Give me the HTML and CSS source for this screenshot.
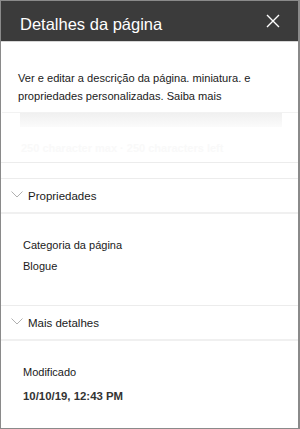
FILE: index.html
```html
<!DOCTYPE html>
<html lang="pt">
<head>
<meta charset="utf-8">
<link rel="stylesheet" href="styles.css">
</head>
<body>
<div class="panel">
  <header class="head">
    <h1 class="title">Detalhes da página</h1>
    <svg class="close" width="14" height="14" viewBox="0 0 14 14"><path d="M1 1L13 13M13 1L1 13" stroke="#fff" stroke-width="1.4" fill="none"/></svg>
  </header>
  <p class="desc">Ver e editar a descrição da página. miniatura. e propriedades personalizadas. Saiba mais</p>
  <div class="faded">
    <div class="thumb"><div class="thumb-a"></div><div class="thumb-b"></div></div>
    <div class="faded-text">250 character max · 250 characters left</div>
  </div>
  <section class="sec">
    <div class="sec-head">
      <svg class="chev" width="12" height="7" viewBox="0 0 12 7"><path d="M0.5 0.5L6 6L11.5 0.5" stroke="#b0b0b0" stroke-width="1" fill="none"/></svg>
      <span>Propriedades</span>
    </div>
    <div class="sec-body">
      <div class="label">Categoria da página</div>
      <div class="value">Blogue</div>
    </div>
  </section>
  <section class="sec last">
    <div class="sec-head">
      <svg class="chev" width="12" height="7" viewBox="0 0 12 7"><path d="M0.5 0.5L6 6L11.5 0.5" stroke="#b0b0b0" stroke-width="1" fill="none"/></svg>
      <span>Mais detalhes</span>
    </div>
    <div class="sec-body">
      <div class="label">Modificado</div>
      <div class="value bold">10/10/19, 12:43 PM</div>
    </div>
  </section>
</div>
</body>
</html>
```

FILE: styles.css
```css
html, body { margin: 0; padding: 0; background: #fff; }
body { font-family: "Liberation Sans", Arial, sans-serif; color: #1a1a1a; }
.panel {
  box-sizing: border-box;
  width: 300px;
  height: 429px;
  border: 1px solid #8a8a8a;
  border-right-width: 2px;
  overflow: hidden;
  display: flex;
  flex-direction: column;
}
.panel > * { flex-shrink: 0; }
.head {
  box-sizing: border-box;
  height: 41px;
  background: #3b3b3b;
  border-bottom: 1px solid #d6d6d6;
  display: flex;
  align-items: center;
  justify-content: space-between;
  padding: 0 18px 0 19px;
}
.title {
  margin: 6px 0 0;
  font-weight: normal;
  font-size: 16.5px;
  color: #fff;
}
.close { margin-top: 0; }
.desc {
  margin: 27px 0 0;
  padding: 0 20px 0 17px;
  font-size: 11.1px;
  line-height: 18px;
  color: #1a1a1a;
}
.faded { box-sizing: border-box; height: 51px; margin-top: 7px; border-bottom: 1px solid #ececec; }
.thumb { display: flex; height: 14px; margin: 0 0 0 1px; border-top: 1px solid #f2f2f2; }
.thumb-a { width: 18px; }
.thumb-b { flex: 1; margin-right: 16px; background: linear-gradient(#f0f0f0, #fbfbfb); }
.faded-text {
  margin: 15px 0 0 20px;
  font-size: 11px;
  color: #f9f9f9;
  font-weight: bold;
}
.sec { margin-top: 15px; border-top: 1px solid #ececec; }
.sec.last { margin-top: 0; flex: 1; }
.sec-head {
  height: 33px;
  border-bottom: 2px solid #f0f0f0;
  display: flex;
  align-items: center;
  padding-left: 10px;
  font-size: 11.5px;
  color: #1a1a1a;
}
.chev { margin-right: 5px; margin-top: -2px; }
.sec-body { padding: 21px 0 0 22px; height: 70px; }
.label { font-size: 11px; line-height: 21px; color: #1a1a1a; }
.value { font-size: 11px; line-height: 21px; color: #1a1a1a; }
.bold { font-weight: bold; font-size: 11.4px; color: #333; margin-top: 3px; }
```
